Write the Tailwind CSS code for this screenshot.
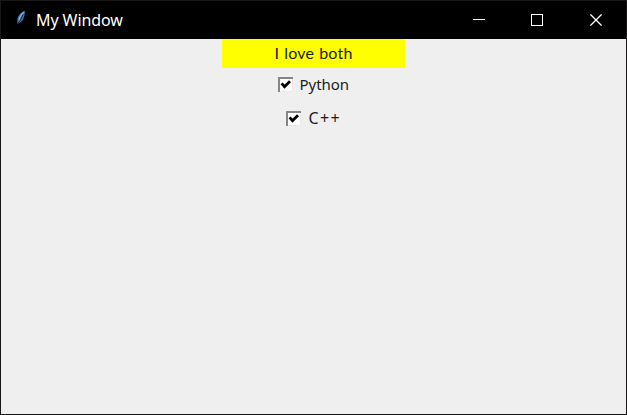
<!DOCTYPE html>
<html lang="en">
<head>
<meta charset="utf-8">
<title>My Window</title>
<script src="https://cdn.jsdelivr.net/npm/@tailwindcss/browser@4"></script>
</head>
<body class="overflow-hidden">
<div class="flex h-[415px] w-[627px] flex-col border border-[#181616] bg-[#efefef] font-['Noto_Sans','Open_Sans',sans-serif] text-[#1c1c1c]">
  <header class="flex h-[38px] shrink-0 items-center bg-black text-white">
    <svg class="mb-1 ml-[14px] h-4 w-3 shrink-0" viewBox="0 0 12 16">
      <path d="M10 .8C6.4 2 3.2 5 2.4 9L2.2 13.8C4 13 6.8 12.4 8 9.8C9.3 6.8 10 4 10 .8Z" fill="#3c6ca8"/>
      <path d="M8.8 2.2C6.2 4.4 4.6 7 3.9 10.5" stroke="#8fb6de" stroke-width="1.1" fill="none"/>
      <path d="M8 4.6L5.2 10.6L2.3 14" stroke="#172b4b" stroke-width="1" fill="none"/>
    </svg>
    <h1 class="ml-[9px] whitespace-nowrap text-[16px] leading-[22px] tracking-[-0.08px]">My Window</h1>
    <div class="ml-auto flex h-full">
      <button class="grid w-[58px] place-items-center" aria-label="Minimize"><svg class="h-3 w-3" viewBox="0 0 12 12" shape-rendering="crispEdges"><path d="M0 5.5H12" stroke="white"/></svg></button>
      <button class="grid w-[58px] place-items-center" aria-label="Maximize"><svg class="h-3 w-3" viewBox="0 0 12 12" shape-rendering="crispEdges"><rect x=".5" y=".5" width="11" height="11" fill="none" stroke="white"/></svg></button>
      <button class="grid w-[60px] place-items-center" aria-label="Close"><svg class="h-3 w-3" viewBox="0 0 12 12"><path d="M.4.4L11.6 11.6M11.6.4L.4 11.6" stroke="white" stroke-width="1.3"/></svg></button>
    </div>
  </header>
  <main class="flex flex-col items-center text-[15px]">
    <div class="flex h-[29px] w-[183px] items-center justify-center bg-[#ffff00] pb-[2px] font-[Lato,sans-serif]"><span class="whitespace-nowrap text-[16px] tracking-[0.2px] [word-spacing:0.8px]">I love both</span></div>
    <label class="flex h-[33px] w-[72px] items-center gap-[7px]">
      <svg class="h-[15px] w-[15px] shrink-0" viewBox="0 0 15 15"><path d="M0 0H15V15H0Z" fill="#fff"/><path d="M1 15V1H15" fill="none" stroke="#858585" stroke-width="2"/><path d="M14.5 2V14.5H2" fill="none" stroke="#e9e9e9"/><path d="M3.6 6.4L6.5 9.7L12 4.2" fill="none" stroke="#000" stroke-width="2.8"/></svg>
      <span class="whitespace-nowrap tracking-[-0.05px]">Python</span>
    </label>
    <label class="flex h-[34px] w-[56px] items-center gap-[8px]">
      <svg class="h-[15px] w-[15px] shrink-0" viewBox="0 0 15 15"><path d="M0 0H15V15H0Z" fill="#fff"/><path d="M1 15V1H15" fill="none" stroke="#858585" stroke-width="2"/><path d="M14.5 2V14.5H2" fill="none" stroke="#e9e9e9"/><path d="M3.6 6.4L6.5 9.7L12 4.2" fill="none" stroke="#000" stroke-width="2.8"/></svg>
      <span class="whitespace-nowrap text-[16px] tracking-[1.4px]">C++</span>
    </label>
  </main>
</div>
</body>
</html>
